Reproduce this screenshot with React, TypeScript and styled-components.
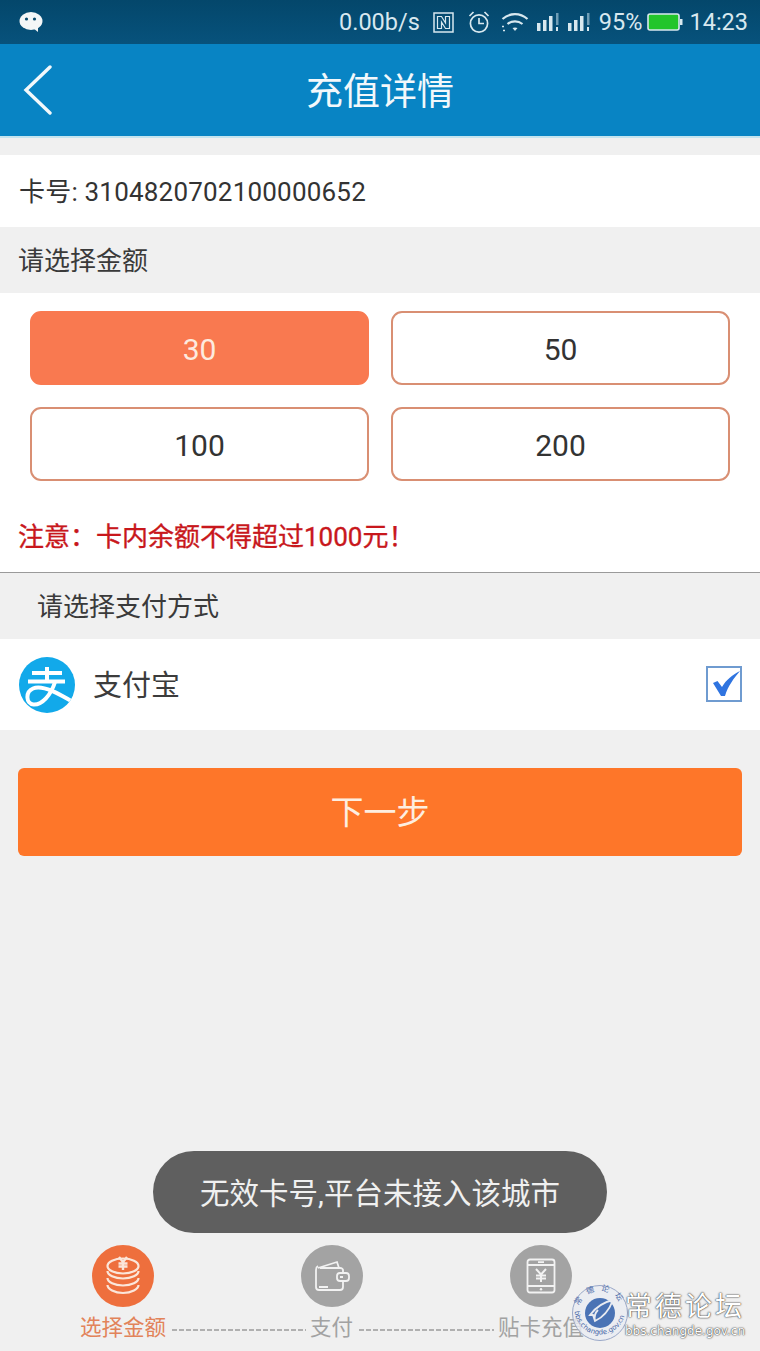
import React from 'react';
import styled, { createGlobalStyle } from 'styled-components';

const GlobalStyle = createGlobalStyle`
    html, body {
        margin: 0;
        padding: 0;
        background: #f0f0f0;
    }
    * {
        box-sizing: border-box;
    }
`;

const Page = styled.div`
    position: relative;
    width: 760px;
    height: 1351px;
    overflow: hidden;
    display: flex;
    flex-direction: column;
    background: #f0f0f0;
    font-family: Roboto, "Noto Sans CJK SC", sans-serif;
    color: #333;
`;

const StatusBar = styled.div`
    height: 44px;
    flex-shrink: 0;
    display: flex;
    align-items: center;
    padding: 0 12px 0 19px;
    background: linear-gradient(#04476b, #07527c);
    color: #d8e8ef;
    font-size: 23.5px;
`;

const StatusRight = styled.div`
    margin-left: auto;
    display: flex;
    align-items: center;
`;

const StatusItem = styled.span<{ $gap?: number }>`
    display: flex;
    align-items: center;
    margin-left: ${p => p.$gap ?? 0}px;
`;

const NavBar = styled.div`
    height: 94px;
    flex-shrink: 0;
    position: relative;
    display: flex;
    align-items: center;
    justify-content: center;
    padding-bottom: 3px;
    background: #0884c4;
    border-bottom: 2px solid #c4e4ef;
    color: #f2f8fb;
    font-size: 37px;
`;

const BackIcon = styled.svg`
    position: absolute;
    left: 23px;
    top: 21px;
`;

const CardRow = styled.div`
    margin-top: 17px;
    height: 72px;
    display: flex;
    align-items: center;
    padding: 0 19px 3px;
    background: #fff;
    font-size: 26px;
    letter-spacing: 0.2px;
    color: #333;
`;

const SectionTitle = styled.div<{ $inset: number; $height: number }>`
    height: ${p => p.$height}px;
    display: flex;
    align-items: center;
    padding: 0 0 3px ${p => p.$inset}px;
    font-size: 26px;
    color: #3a3a3a;
`;

const AmountPanel = styled.div`
    height: 280px;
    padding: 18px 30px 0;
    background: #fff;
    border-bottom: 1px solid #9a9a9a;
`;

const AmountGrid = styled.div`
    display: grid;
    grid-template-columns: 339px 339px;
    grid-auto-rows: 74px;
    column-gap: 22px;
    row-gap: 22px;
`;

const AmountButton = styled.div<{ $active?: boolean }>`
    display: flex;
    align-items: center;
    justify-content: center;
    padding-top: 2px;
    border-radius: 11px;
    border: 2px solid ${p => (p.$active ? '#f97950' : '#d98f73')};
    background: ${p => (p.$active ? '#f97950' : '#fff')};
    color: ${p => (p.$active ? '#fdeadf' : '#333')};
    font-size: 30px;
`;

const Notice = styled.div`
    margin: 38px 0 0 -12px;
    font-size: 26px;
    line-height: 36px;
    color: #c8171c;
    -webkit-text-stroke: 0.35px #c8171c;
    white-space: nowrap;
`;

const PayRow = styled.div`
    height: 91px;
    display: flex;
    align-items: center;
    padding: 0 18px 0 19px;
    background: #fff;
`;

const PayName = styled.span`
    margin: 0 0 4px 18px;
    font-size: 29px;
    color: #3c3c3c;
`;

const CheckBox = styled.svg`
    margin: 0 0 2px auto;
`;

const NextButton = styled.div`
    margin: 38px 18px 0;
    height: 88px;
    display: flex;
    align-items: center;
    justify-content: center;
    padding-bottom: 4px;
    border-radius: 6px;
    background: #fe7629;
    color: #fdeee0;
    font-size: 33px;
`;

const Toast = styled.div`
    position: absolute;
    left: 153px;
    top: 1151px;
    width: 454px;
    height: 82px;
    display: flex;
    align-items: center;
    justify-content: center;
    padding-bottom: 3px;
    border-radius: 41px;
    background: #5f5f5f;
    color: #f0f0f0;
    font-size: 29.5px;
`;

const Steps = styled.div`
    margin-top: auto;
    height: 106px;
    flex-shrink: 0;
    padding-left: 80px;
    display: flex;
    flex-direction: column;
`;

const StepIcons = styled.div`
    display: flex;
    padding-left: 12px;
    gap: 147px;
`;

const StepCircle = styled.div<{ $active?: boolean }>`
    width: 62px;
    height: 62px;
    border-radius: 50%;
    display: flex;
    align-items: center;
    justify-content: center;
    background: ${p => (p.$active ? '#ee6f3d' : '#a3a3a3')};
`;

const StepLabels = styled.div`
    margin-top: 6px;
    display: flex;
    align-items: center;
    font-size: 21.5px;
    line-height: 30px;
    white-space: nowrap;
`;

const StepLabel = styled.span<{ $active?: boolean }>`
    color: ${p => (p.$active ? '#e2835a' : '#a2a2a2')};
`;

const StepDash = styled.span<{ $width: number }>`
    width: ${p => p.$width}px;
    height: 2px;
    margin: 3px 4px 0 6px;
    background: repeating-linear-gradient(90deg, #b0b0b0 0 5px, transparent 5px 7px);
`;

const Watermark = styled.div`
    position: absolute;
    left: 572px;
    top: 1285px;
    display: flex;
`;

const WatermarkSeal = styled.svg`
    overflow: visible;
`;

const WatermarkText = styled.div`
    margin-left: -3px;
    display: flex;
    flex-direction: column;
    align-items: center;
`;

const WatermarkTitle = styled.div`
    font-family: "Noto Sans CJK SC", sans-serif;
    font-size: 27px;
    line-height: 39px;
    letter-spacing: 3px;
    color: #fff;
    text-shadow: 0 0 2px #333, 0 0 1px #333;
`;

const WatermarkUrl = styled.div`
    font-family: "DejaVu Sans", sans-serif;
    font-size: 12px;
    line-height: 14px;
    color: #fff;
    text-shadow: 0 0 2px #333, 0 0 1px #333;
`;

const WeChatIcon = () => (
    <svg width="24" height="22" viewBox="0 0 24 22">
        <ellipse cx="12" cy="10" rx="11.5" ry="9" fill="#f4f6f7" />
        <path d="M14 17l5 4v-6z" fill="#f4f6f7" />
        <circle cx="7.5" cy="8" r="1.6" fill="#0a4a6d" />
        <circle cx="15.5" cy="8" r="1.6" fill="#0a4a6d" />
    </svg>
);

const NfcIcon = () => (
    <svg width="21" height="21" viewBox="0 0 21 21" fill="none" stroke="#d8e8ef" strokeWidth="1.5">
        <rect x="1" y="1" width="19" height="19" />
        <path d="M4.5 4.5h4l4 6.5V4.5h4v12h-4l-4-6.5v6.5h-4z" strokeWidth="1.2" />
    </svg>
);

const AlarmIcon = () => (
    <svg width="22" height="24" viewBox="0 0 22 24" fill="none" stroke="#d8e8ef" strokeWidth="1.7">
        <circle cx="11" cy="13.5" r="8.6" />
        <path d="M11 8v5.5h5M1.5 6l4-4M20.5 6l-4-4" />
    </svg>
);

const WifiIcon = () => (
    <svg width="28" height="22" viewBox="0 0 28 22" fill="none" stroke="#d8e8ef" strokeWidth="2.2">
        <path d="M1.5 8C9 1.5 19 1.5 26.5 8M6.5 13C11 9.5 17 9.5 21.5 13" />
        <path d="M11.5 17c1.7-.8 3.3-.8 5 0L14 20z" fill="#d8e8ef" stroke="none" />
        <path d="M1 15.5h2M2 19.5h2" strokeWidth="1.4" />
    </svg>
);

const SignalIcon = () => (
    <svg width="24" height="18" viewBox="0 0 24 18" fill="#d8e8ef">
        <rect x="0" y="10" width="3.5" height="8" />
        <rect x="6" y="7" width="3.5" height="11" />
        <rect x="12" y="3" width="3.5" height="15" />
        <rect x="19" y="0" width="2.5" height="12" fill="#6f9db6" />
        <rect x="19" y="14" width="2" height="4" />
    </svg>
);

const BatteryIcon = () => (
    <svg width="36" height="18" viewBox="0 0 36 18">
        <rect x="1" y="1" width="31" height="16" rx="2" fill="#22c52a" stroke="#d8e8ef" strokeWidth="1.6" />
        <rect x="33" y="6" width="2.5" height="6" fill="#d8e8ef" />
    </svg>
);

const AlipayIcon = () => (
    <svg width="56" height="56" viewBox="0 0 56 56">
        <clipPath id="alipay-disc">
            <circle cx="28" cy="28" r="28" />
        </clipPath>
        <circle cx="28" cy="28" r="28" fill="#12a9ea" />
        <g fill="none" stroke="#fff" strokeWidth="4" clipPath="url(#alipay-disc)">
            <path d="M13 16h30M28 10v14M9 24.5h37" />
            <path d="M36 25C32 38 23 48 14.5 47.5 7 47 6 35 14 31.5 24 27 42 38 59 48" />
        </g>
    </svg>
);

const CheckIcon = () => (
    <CheckBox width="36" height="36" viewBox="0 0 36 36">
        <rect x="1" y="1" width="34" height="34" fill="#fff" stroke="#6f9bd0" strokeWidth="2" />
        <path d="M7 17l4.5-2 4.5 6C20 14 26 9 34 5c-6 7-12 15-15 25h-4z" fill="#2f74e0" />
    </CheckBox>
);

const CoinsIcon = () => (
    <svg width="34" height="40" viewBox="0 0 34 40" fill="none" stroke="#fbe6da" strokeWidth="2.2">
        <ellipse cx="17" cy="10" rx="15.5" ry="7.5" />
        <path d="M1.5 15c0 4 7 7.5 15.5 7.5S32.5 19 32.5 15" />
        <path d="M1.5 22c0 4 7 7.5 15.5 7.5S32.5 26 32.5 22" />
        <path d="M1.5 29c0 4 7 8 15.5 8s15.5-4 15.5-8" />
        <path d="M13 1l4 5 4-5M17 6v8M12.5 7.5h9M12.5 10.5h9" strokeWidth="2.4" />
    </svg>
);

const WalletIcon = () => (
    <svg width="36" height="32" viewBox="0 0 36 32" fill="none" stroke="#f2f2f2" strokeWidth="1.8">
        <path d="M4 8L23 2l2 6" />
        <path d="M4 6c-2 1-2 2-2 4v17c0 2 1 3 3 3h21c2 0 3-1 3-3v-6M29 13V10c0-1-1-2-3-2H6" />
        <rect x="23" y="13" width="12" height="8" rx="3" />
        <path d="M26 17h3M5 27h9" />
    </svg>
);

const PhoneYuanIcon = () => (
    <svg width="30" height="36" viewBox="0 0 30 36" fill="none" stroke="#f2f2f2" strokeWidth="1.8">
        <rect x="1.5" y="1.5" width="27" height="33" rx="2.5" />
        <path d="M1.5 7h27M1.5 28h27M12 4.2h6" />
        <path d="M10 11l5 5.5 5-5.5M15 16.5V24M10 17.5h10M10 20.5h10" strokeWidth="2" />
        <circle cx="15" cy="31.3" r="1.2" fill="#f2f2f2" stroke="none" />
    </svg>
);

const WatermarkLogo = () => (
    <WatermarkSeal width="56" height="56" viewBox="0 0 56 56">
        <defs>
            <path id="ring-top" d="M6 28a22 22 0 0 1 44 0" />
            <path id="ring-bottom" d="M2.5 24a25.5 25.5 0 0 0 51 0" />
        </defs>
        <circle cx="28" cy="28" r="27.5" fill="#e9ebf1" fillOpacity="0.82" stroke="#9aa8c8" strokeWidth="1" />
        <circle cx="28" cy="28" r="15" fill="#4a73b5" />
        <path d="M18 30c6-8 14-13 23-15-3 8-9 17-18 21l-2-6zM23 36c-1-4 0-8 3-11" fill="none" stroke="#e9ebf1" strokeWidth="1.8" />
        <text fontFamily='"Noto Sans CJK SC", sans-serif' fontSize="8" fill="#4a6aa8">
            <textPath href="#ring-top" startOffset="10%" letterSpacing="6">常德论坛</textPath>
        </text>
        <text fontFamily='"DejaVu Sans", sans-serif' fontSize="7" fill="#4a6aa8">
            <textPath href="#ring-bottom" startOffset="3%">bbs.changde.gov.cn</textPath>
        </text>
    </WatermarkSeal>
);

const amounts = [
    { value: '30', active: true },
    { value: '50' },
    { value: '100' },
    { value: '200' },
];

function App() {
    return (
        <Page>
            <GlobalStyle />
            <StatusBar>
                <WeChatIcon />
                <StatusRight>
                    <StatusItem>0.00b/s</StatusItem>
                    <StatusItem $gap={13}><NfcIcon /></StatusItem>
                    <StatusItem $gap={14}><AlarmIcon /></StatusItem>
                    <StatusItem $gap={11}><WifiIcon /></StatusItem>
                    <StatusItem $gap={8}><SignalIcon /></StatusItem>
                    <StatusItem $gap={7}><SignalIcon /></StatusItem>
                    <StatusItem $gap={7}>95%</StatusItem>
                    <StatusItem $gap={5}><BatteryIcon /></StatusItem>
                    <StatusItem $gap={6}>14:23</StatusItem>
                </StatusRight>
            </StatusBar>
            <NavBar>
                <BackIcon width="30" height="50" viewBox="0 0 30 50" fill="none" stroke="#f2f8fb" strokeWidth="3.4" strokeLinecap="round">
                    <path d="M27 2L3 25l24 23" />
                </BackIcon>
                充值详情
            </NavBar>
            <CardRow>卡号: 3104820702100000652</CardRow>
            <SectionTitle $inset={18} $height={66}>请选择金额</SectionTitle>
            <AmountPanel>
                <AmountGrid>
                    {amounts.map(a => (
                        <AmountButton key={a.value} $active={a.active}>{a.value}</AmountButton>
                    ))}
                </AmountGrid>
                <Notice>注意：卡内余额不得超过1000元！</Notice>
            </AmountPanel>
            <SectionTitle $inset={37} $height={66}>请选择支付方式</SectionTitle>
            <PayRow>
                <AlipayIcon />
                <PayName>支付宝</PayName>
                <CheckIcon />
            </PayRow>
            <NextButton>下一步</NextButton>
            <Steps>
                <StepIcons>
                    <StepCircle $active><CoinsIcon /></StepCircle>
                    <StepCircle><WalletIcon /></StepCircle>
                    <StepCircle><PhoneYuanIcon /></StepCircle>
                </StepIcons>
                <StepLabels>
                    <StepLabel $active>选择金额</StepLabel>
                    <StepDash $width={134} />
                    <StepLabel>支付</StepLabel>
                    <StepDash $width={135} />
                    <StepLabel>贴卡充值</StepLabel>
                </StepLabels>
            </Steps>
            <Toast>无效卡号,平台未接入该城市</Toast>
            <Watermark>
                <WatermarkLogo />
                <WatermarkText>
                    <WatermarkTitle>常德论坛</WatermarkTitle>
                    <WatermarkUrl>bbs.changde.gov.cn</WatermarkUrl>
                </WatermarkText>
            </Watermark>
        </Page>
    );
}

export default App;
